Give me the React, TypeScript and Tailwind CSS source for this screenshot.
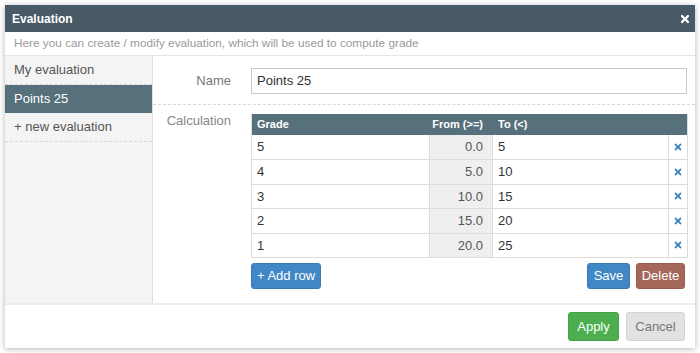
import { FaTimes } from 'react-icons/fa'

const rows = [
  { grade: '5', from: '0.0', to: '5' },
  { grade: '4', from: '5.0', to: '10' },
  { grade: '3', from: '10.0', to: '15' },
  { grade: '2', from: '15.0', to: '20' },
  { grade: '1', from: '20.0', to: '25' },
]

const font = { fontFamily: '"Liberation Sans", Arial, sans-serif' }

export default function App() {
  return (
    <div className="w-[700px] h-[353px] bg-white pt-[5px] pl-[5px]" style={font}>
      <div className="w-[690px] h-[343px] flex flex-col bg-white shadow-[0_1px_6px_rgba(0,0,0,0.3)]">
        {/* Title bar */}
        <div className="h-[27px] bg-[#475a65] flex items-center justify-between pl-[7px] pr-[4px]">
          <span className="text-white font-bold text-[12px]">Evaluation</span>
          <FaTimes className="text-white w-[12px] h-[12px]" />
        </div>

        {/* Subtitle */}
        <div className="h-[24px] flex items-center px-[9px] text-[11.8px] text-[#9a9a9a] border-b border-[#e5e5e5]">
          Here you can create / modify evaluation, which will be used to compute grade
        </div>

        {/* Body */}
        <div className="h-[249px] flex border-b-2 border-[#ececec]">
          {/* Sidebar */}
          <div className="w-[148px] bg-[#f4f4f4] border-r border-[#dedede] text-[13px] text-[#555]">
            <div className="h-[29px] flex items-center pl-[9px] border-b border-dashed border-[#d8d8d8]">
              My evaluation
            </div>
            <div className="h-[28px] flex items-center pl-[9px] bg-[#56707c] text-white">
              Points 25
            </div>
            <div className="h-[29px] flex items-center pl-[9px] border-b border-dashed border-[#d8d8d8]">
              + new evaluation
            </div>
          </div>

          {/* Main */}
          <div className="flex-1 flex flex-col text-[13px]">
            <div className="h-[49px] flex items-center border-b border-dashed border-[#d8d8d8] pt-[1px]">
              <div className="w-[78px] text-right text-[#777]">Name</div>
              <div className="ml-[20px] w-[436px] h-[26px] border border-[#c8c8c8] flex items-center px-[5px] text-[#333]">
                Points 25
              </div>
            </div>

            <div className="flex pt-[9px]">
              <div className="w-[78px] text-right text-[#888] -mt-[3px]">Calculation</div>
              <div className="ml-[20px] w-[437px] flex flex-col">
                <div className="border border-[#dcdcdc] border-t-0">
                  <div className="h-[21px] bg-[#56707c] flex items-center text-white font-bold text-[11px]">
                    <div className="w-[178px] pl-[5px]">Grade</div>
                    <div className="w-[63px] text-right pr-[10px]">From (&gt;=)</div>
                    <div className="flex-1 pl-[5px]">To (&lt;)</div>
                  </div>
                  {rows.map((r, i) => (
                    <div
                      key={r.grade}
                      className={`h-[24.4px] flex text-[13px] text-[#333] ${i > 0 ? 'border-t border-[#dcdcdc]' : ''}`}
                    >
                      <div className="w-[178px] flex items-center pl-[5px] border-r border-[#dcdcdc]">{r.grade}</div>
                      <div className="w-[63px] flex items-center justify-end pr-[9px] bg-[#efefef] text-[#555] border-r border-[#dcdcdc]">
                        {r.from}
                      </div>
                      <div className="flex-1 flex items-center pl-[5px] border-r border-[#dcdcdc]">{r.to}</div>
                      <div className="w-[18px] flex items-center justify-center">
                        <FaTimes className="text-[#3b7fc2] w-[10px] h-[10px]" />
                      </div>
                    </div>
                  ))}
                </div>

                <div className="flex items-center mt-[5px]">
                  <button className="h-[26px] w-[70px] bg-[#3f87c5] rounded-[3px] border border-[#3a7bb4] text-white text-[13px]">
                    + Add row
                  </button>
                  <div className="flex-1" />
                  <button className="h-[26px] w-[43px] bg-[#3f87c5] rounded-[3px] border border-[#3a7bb4] text-white text-[13px]">
                    Save
                  </button>
                  <button className="ml-[6px] h-[26px] w-[49px] bg-[#a5675a] rounded-[3px] border border-[#985d51] text-white text-[13px] mr-[3px]">
                    Delete
                  </button>
                </div>
              </div>
            </div>
          </div>
        </div>

        {/* Footer */}
        <div className="flex-1 flex items-center justify-end gap-[7px] pr-[10px]">
          <button className="h-[29px] w-[51px] bg-[#4cae4f] border border-[#46a049] rounded-[3px] text-white text-[13px]">
            Apply
          </button>
          <button className="h-[29px] w-[59px] bg-[#e2e2e2] border border-[#d4d4d4] rounded-[3px] text-[#777] text-[13px]">
            Cancel
          </button>
        </div>
      </div>
    </div>
  )
}
